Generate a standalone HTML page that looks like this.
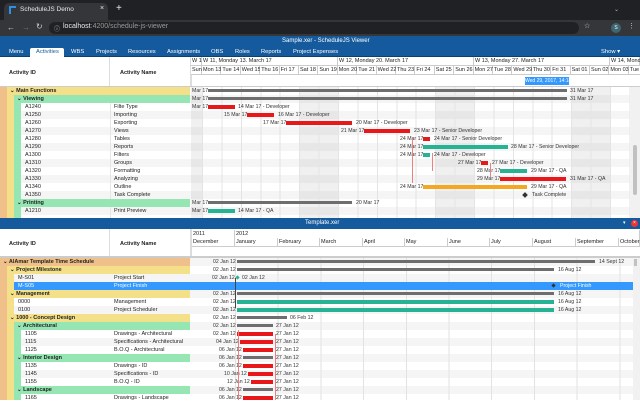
<!DOCTYPE html>
<html><head><meta charset="utf-8"><style>
*{margin:0;padding:0;box-sizing:border-box}
body{width:640px;height:400px;overflow:hidden;background:#fff;font-family:"Liberation Sans",Arial,sans-serif;position:relative;font-size:5.5px;color:#222}
div,span{position:absolute;white-space:nowrap}
.t{line-height:8px;height:8px}
.b{font-weight:bold}
.bar{height:4px}
.red{background:#e8171a}.teal{background:#26b394}.org{background:#f5a623}.gry{background:#6e6e6e;height:3px}
.lbl{line-height:8px;font-size:5.2px;color:#333}
.hd{font-size:5.5px;line-height:9px;border-right:1px solid #ccc;border-bottom:1px solid #ccc;padding-left:1px;height:9px;background:#fff}
</style></head><body>
<!-- browser chrome -->
<div style="left:0;top:0;width:640px;height:20px;background:#202124"></div>
<div style="left:4px;top:3px;width:104px;height:17px;background:#35363a;border-radius:5px 5px 0 0"></div>
<div style="left:9px;top:6px;width:7px;height:8px;border-left:2px solid #2d8fe6;border-top:2px solid #2d8fe6"></div>
<div style="left:20px;top:6px;color:#e8eaed;font-size:6.5px">ScheduleJS Demo</div>
<div style="left:100px;top:5px;color:#e8eaed;font-size:7px">×</div>
<div style="left:116px;top:3px;color:#e8eaed;font-size:10px">+</div>
<div style="left:614px;top:6px;color:#bbb;font-size:6px">⌄</div>
<div style="left:0;top:20px;width:640px;height:16px;background:#35363a"></div>
<div style="left:7px;top:23px;color:#ccc;font-size:8px">←</div>
<div style="left:22px;top:23px;color:#777;font-size:8px">→</div>
<div style="left:36px;top:22px;color:#ccc;font-size:8px">↻</div>
<div style="left:49px;top:22px;width:530px;height:12px;background:#202124;border-radius:6px"></div>
<div style="left:54px;top:24px;color:#ccc;font-size:6px">ⓘ</div>
<div style="left:63px;top:23px;color:#e8eaed;font-size:7px">localhost<span style="position:static;color:#999">:4200/schedule-js-viewer</span></div>
<div style="left:584px;top:22px;color:#ccc;font-size:7px">☆</div>
<div style="left:611px;top:23px;width:10px;height:10px;border-radius:5px;background:#3d6670;color:#fff;font-size:5px;text-align:center;line-height:10px">S</div>
<div style="left:628px;top:22px;color:#ccc;font-size:7px">⋮</div>
<!-- app top bar -->
<div style="left:0;top:36px;width:640px;height:21px;background:#155a9c"></div>
<div style="left:282px;top:38px;color:#fff;font-size:6px">Sample.xer - ScheduleJS Viewer</div>
<div style="left:0;top:56px;width:640px;height:1px;background:#0d3f70"></div>
<div style="left:30px;top:48px;width:34px;height:9px;background:#fff;border-radius:2px 2px 0 0"></div>
<div style="top:49px;left:0;width:640px;font-size:5.8px;color:#fff">
<span style="left:9px">Menu</span><span style="left:36px;color:#155a9c">Activities</span><span style="left:71px">WBS</span><span style="left:96px">Projects</span><span style="left:128px">Resources</span><span style="left:167px">Assignments</span><span style="left:211px">OBS</span><span style="left:235px">Roles</span><span style="left:261px">Reports</span><span style="left:293px">Project Expenses</span><span style="left:601px">Show ▾</span></div>
<!-- top header -->
<div style="left:0;top:57px;width:110px;height:30px;border-right:1px solid #ddd"></div>
<div class="b" style="left:9px;top:70px;font-size:5.5px">Activity ID</div>
<div class="b" style="left:120px;top:70px;font-size:5.5px">Activity Name</div>
<div style="left:190px;top:57px;width:2px;height:161px;background:#ddd"></div>
<div style="left:0;top:86px;width:640px;height:1px;background:#ccc"></div>
<div class="hd" style="left:191px;top:57px;width:11px">W 1</div>
<div class="hd" style="left:202px;top:57px;width:136px">W 11, Monday 13. March 17</div>
<div class="hd" style="left:338px;top:57px;width:136px">W 12, Monday 20. March 17</div>
<div class="hd" style="left:474px;top:57px;width:136px">W 13, Monday 27. March 17</div>
<div class="hd" style="left:610px;top:57px;width:30px">W 14, Monda</div>
<div style="top:66px;left:0">
<div class="hd" style="left:191px;width:11px">Sun</div><div class="hd" style="left:202px;width:19.4px">Mon 13</div><div class="hd" style="left:221.4px;width:19.4px">Tue 14</div><div class="hd" style="left:240.8px;width:19.4px">Wed 15</div><div class="hd" style="left:260.2px;width:19.4px">Thu 16</div><div class="hd" style="left:279.6px;width:19.4px">Fri 17</div><div class="hd" style="left:299px;width:19.4px">Sat 18</div><div class="hd" style="left:318.4px;width:19.4px">Sun 19</div><div class="hd" style="left:337.8px;width:19.4px">Mon 20</div><div class="hd" style="left:357.2px;width:19.4px">Tue 21</div><div class="hd" style="left:376.6px;width:19.4px">Wed 22</div><div class="hd" style="left:396px;width:19.4px">Thu 23</div><div class="hd" style="left:415.4px;width:19.4px">Fri 24</div><div class="hd" style="left:434.8px;width:19.4px">Sat 25</div><div class="hd" style="left:454.2px;width:19.4px">Sun 26</div><div class="hd" style="left:473.6px;width:19.4px">Mon 27</div><div class="hd" style="left:493px;width:19.4px">Tue 28</div><div class="hd" style="left:512.4px;width:19.4px">Wed 29</div><div class="hd" style="left:531.8px;width:19.4px">Thu 30</div><div class="hd" style="left:551.2px;width:19.4px">Fri 31</div><div class="hd" style="left:570.6px;width:19.4px">Sat 01</div><div class="hd" style="left:590px;width:19.4px">Sun 02</div><div class="hd" style="left:609.4px;width:19.4px">Mon 03</div><div class="hd" style="left:628.8px;width:12px">Tue</div></div>
<div style="left:525px;top:77px;width:44px;height:8px;background:#3399ff;color:#fff;font-size:5px;line-height:8px;text-align:center">Wed 29, 2017, 14:18</div>
<!-- top body rows -->
<div style="left:0;top:87px;width:630px;height:131px;background:repeating-linear-gradient(#fff 0 8px,#f5f5f5 8px 16px)"></div>
<div style="left:191px;top:87px;width:439px;height:131px;background:linear-gradient(90deg,rgba(0,0,0,.06) 0 11px,transparent 11px 108px,rgba(0,0,0,.06) 108px 147px,transparent 147px 244px,rgba(0,0,0,.06) 244px 283px,transparent 283px 380px,rgba(0,0,0,.06) 380px 419px,transparent 419px)"></div>
<div style="left:202px;top:87px;width:428px;height:131px;background:repeating-linear-gradient(90deg,#e4e4e4 0 1px,transparent 1px 19.43px)"></div>
<div style="left:630px;top:87px;width:10px;height:131px;background:#f1f1f1"></div>
<div style="left:633px;top:145px;width:4px;height:50px;background:#c1c1c1;border-radius:2px"></div>
<div style="left:0;top:87px;width:7px;height:131px;background:#f0c08a"></div>
<div style="left:7px;top:87px;width:7px;height:131px;background:#f5e08a"></div>
<div style="left:7px;top:87px;width:183px;height:8px;background:#f5e08a"></div>
<div style="left:14px;top:95px;width:7px;height:123px;background:#96e6b4"></div>
<div style="left:14px;top:95px;width:176px;height:8px;background:#96e6b4"></div>
<div style="left:14px;top:199px;width:176px;height:8px;background:#96e6b4"></div>
<div style="left:110px;top:103px;width:1px;height:96px;background:#e6e6e6"></div>
<div style="left:110px;top:207px;width:1px;height:11px;background:#e6e6e6"></div>
<div class="t b" style="left:10px;top:87px">⌄ Main Functions</div>
<div class="t b" style="left:17px;top:95px">⌄ Viewing</div>
<div style="left:0;top:103px">
<div class="t" style="left:25px;top:0">A1240</div><div class="t" style="left:114px;top:0">Filte Type</div>
<div class="t" style="left:25px;top:8px">A1250</div><div class="t" style="left:114px;top:8px">Importing</div>
<div class="t" style="left:25px;top:16px">A1260</div><div class="t" style="left:114px;top:16px">Exporting</div>
<div class="t" style="left:25px;top:24px">A1270</div><div class="t" style="left:114px;top:24px">Views</div>
<div class="t" style="left:25px;top:32px">A1280</div><div class="t" style="left:114px;top:32px">Tables</div>
<div class="t" style="left:25px;top:40px">A1290</div><div class="t" style="left:114px;top:40px">Reports</div>
<div class="t" style="left:25px;top:48px">A1300</div><div class="t" style="left:114px;top:48px">Filters</div>
<div class="t" style="left:25px;top:56px">A1310</div><div class="t" style="left:114px;top:56px">Groups</div>
<div class="t" style="left:25px;top:64px">A1320</div><div class="t" style="left:114px;top:64px">Formatting</div>
<div class="t" style="left:25px;top:72px">A1330</div><div class="t" style="left:114px;top:72px">Analyzing</div>
<div class="t" style="left:25px;top:80px">A1340</div><div class="t" style="left:114px;top:80px">Outline</div>
<div class="t" style="left:25px;top:88px">A1350</div><div class="t" style="left:114px;top:88px">Task Complete</div>
<div class="t b" style="left:17px;top:96px">⌄ Printing</div>
<div class="t" style="left:25px;top:104px">A1210</div><div class="t" style="left:114px;top:104px">Print Preview</div>
</div>
<!-- top bars -->
<div class="lbl" style="left:192px;top:87px">Mar 17</div><div class="gry" style="left:208px;top:89px;width:359px"></div><div class="lbl" style="left:570px;top:87px">31 Mar 17</div>
<div class="lbl" style="left:192px;top:95px">Mar 17</div><div class="gry" style="left:208px;top:97px;width:359px"></div><div class="lbl" style="left:570px;top:95px">31 Mar 17</div>
<div class="lbl" style="left:192px;top:103px">Mar 17</div><div class="bar red" style="left:208px;top:105px;width:27px"></div><div class="lbl" style="left:238px;top:103px">14 Mar 17 - Developer</div>
<div class="lbl" style="left:224px;top:111px">15 Mar 17</div><div class="bar red" style="left:247px;top:113px;width:27px"></div><div class="lbl" style="left:278px;top:111px">16 Mar 17 - Developer</div>
<div class="lbl" style="left:263px;top:119px">17 Mar 17</div><div class="bar red" style="left:286px;top:121px;width:66px"></div><div class="lbl" style="left:356px;top:119px">20 Mar 17 - Developer</div>
<div class="lbl" style="left:341px;top:127px">21 Mar 17</div><div class="bar red" style="left:364px;top:129px;width:46px"></div><div class="lbl" style="left:414px;top:127px">23 Mar 17 - Senior Developer</div>
<div class="lbl" style="left:400px;top:135px">24 Mar 17</div><div class="bar red" style="left:423px;top:137px;width:7px"></div><div class="lbl" style="left:434px;top:135px">24 Mar 17 - Senior Developer</div>
<div class="lbl" style="left:400px;top:143px">24 Mar 17</div><div class="bar teal" style="left:423px;top:145px;width:85px"></div><div class="lbl" style="left:511px;top:143px">28 Mar 17 - Senior Developer</div>
<div class="lbl" style="left:400px;top:151px">24 Mar 17</div><div class="bar teal" style="left:423px;top:153px;width:7px"></div><div class="lbl" style="left:434px;top:151px">24 Mar 17 - Developer</div>
<div class="lbl" style="left:458px;top:159px">27 Mar 17</div><div class="bar red" style="left:481px;top:161px;width:7px"></div><div class="lbl" style="left:492px;top:159px">27 Mar 17 - Developer</div>
<div class="lbl" style="left:477px;top:167px">28 Mar 17</div><div class="bar teal" style="left:500px;top:169px;width:27px"></div><div class="lbl" style="left:531px;top:167px">29 Mar 17 - QA</div>
<div class="lbl" style="left:477px;top:175px">29 Mar 17</div><div class="bar red" style="left:500px;top:177px;width:66px"></div><div class="lbl" style="left:570px;top:175px">31 Mar 17 - QA</div>
<div class="lbl" style="left:400px;top:183px">24 Mar 17</div><div class="bar org" style="left:423px;top:185px;width:104px"></div><div class="lbl" style="left:531px;top:183px">29 Mar 17 - QA</div>
<div style="left:523px;top:193px;width:4px;height:4px;background:#333;transform:rotate(45deg)"></div><div class="lbl" style="left:532px;top:191px">Task Complete</div>
<div class="lbl" style="left:192px;top:199px">Mar 17</div><div class="gry" style="left:208px;top:201px;width:144px"></div><div class="lbl" style="left:356px;top:199px">20 Mar 17</div>
<div class="lbl" style="left:192px;top:207px">Mar 17</div><div class="bar teal" style="left:208px;top:209px;width:27px"></div><div class="lbl" style="left:238px;top:207px">14 Mar 17 - QA</div>
<!-- connectors -->
<div style="left:412px;top:137px;width:1px;height:46px;background:#f08080"></div>
<div style="left:432px;top:153px;width:1px;height:18px;background:#f08080"></div>
<div style="left:490px;top:163px;width:1px;height:14px;background:#f08080"></div>
<!-- bottom title bar -->
<div style="left:0;top:218px;width:640px;height:11px;background:#155a9c"></div>
<div style="left:305px;top:220px;color:#fff;font-size:6px">Template.xer</div>
<div style="left:623px;top:220px;color:#fff;font-size:5px">▾</div>
<div style="left:631px;top:220px;width:7px;height:7px;border-radius:4px;background:#e33;color:#fff;font-size:5px;line-height:7px;text-align:center">×</div>
<!-- bottom header -->
<div style="left:0;top:229px;width:110px;height:28px;border-right:1px solid #ddd"></div>
<div class="b" style="left:9px;top:241px">Activity ID</div>
<div class="b" style="left:120px;top:241px">Activity Name</div>
<div style="left:190px;top:229px;width:2px;height:171px;background:#ddd"></div>
<div style="left:0;top:256px;width:640px;height:2px;background:#ccc"></div>
<div class="hd" style="left:192px;top:230px;width:43px">2011</div><div class="hd" style="left:235px;top:230px;width:405px">2012</div>
<div style="top:238px;left:0">
<div class="hd" style="left:192px;width:43px">December</div><div class="hd" style="left:235px;width:43px">January</div><div class="hd" style="left:278px;width:42px">February</div><div class="hd" style="left:320px;width:43px">March</div><div class="hd" style="left:363px;width:42px">April</div><div class="hd" style="left:405px;width:43px">May</div><div class="hd" style="left:448px;width:42px">June</div><div class="hd" style="left:490px;width:43px">July</div><div class="hd" style="left:533px;width:43px">August</div><div class="hd" style="left:576px;width:43px">September</div><div class="hd" style="left:619px;width:21px">October</div></div>
<!-- bottom rows -->
<div style="left:0;top:258px;width:633px;height:142px;background:repeating-linear-gradient(#f5f5f5 0 8px,#fff 8px 16px)"></div>
<div style="left:235px;top:258px;width:398px;height:142px;background:repeating-linear-gradient(90deg,#e2e2e2 0 1px,transparent 1px 42.7px)"></div>
<div style="left:633px;top:258px;width:7px;height:142px;background:#f1f1f1"></div>
<div style="left:634px;top:259px;width:3px;height:7px;background:#c1c1c1"></div>
<div style="left:0;top:258px;width:190px;height:8px;background:#f0c08a"></div>
<div style="left:0;top:258px;width:7px;height:142px;background:#f0c08a"></div>
<div style="left:7px;top:266px;width:7px;height:134px;background:#f5e08a"></div>
<div style="left:7px;top:266px;width:183px;height:8px;background:#f5e08a"></div>
<div style="left:7px;top:290px;width:183px;height:8px;background:#f5e08a"></div>
<div style="left:7px;top:314px;width:183px;height:8px;background:#f5e08a"></div>
<div style="left:14px;top:322px;width:7px;height:78px;background:#96e6b4"></div>
<div style="left:14px;top:322px;width:176px;height:8px;background:#96e6b4"></div>
<div style="left:14px;top:354px;width:176px;height:8px;background:#96e6b4"></div>
<div style="left:14px;top:386px;width:176px;height:8px;background:#96e6b4"></div>
<div style="left:14px;top:282px;width:619px;height:8px;background:#3399ff"></div>
<div style="left:0;top:258px">
<div class="t b" style="left:3px;top:0">⌄ AlAmar Template Time Schedule</div>
<div class="t b" style="left:10px;top:8px">⌄ Project Milestone</div>
<div class="t" style="left:18px;top:16px">M-S01</div><div class="t" style="left:114px;top:16px">Project Start</div>
<div class="t" style="left:18px;top:24px;color:#fff">M-S05</div><div class="t" style="left:114px;top:24px;color:#fff">Project Finish</div>
<div class="t b" style="left:10px;top:32px">⌄ Management</div>
<div class="t" style="left:18px;top:40px">0000</div><div class="t" style="left:114px;top:40px">Management</div>
<div class="t" style="left:18px;top:48px">0100</div><div class="t" style="left:114px;top:48px">Project Scheduler</div>
<div class="t b" style="left:10px;top:56px">⌄ 1000 - Concept Design</div>
<div class="t b" style="left:17px;top:64px">⌄ Architectural</div>
<div class="t" style="left:25px;top:72px">1105</div><div class="t" style="left:114px;top:72px">Drawings - Architectural</div>
<div class="t" style="left:25px;top:80px">1115</div><div class="t" style="left:114px;top:80px">Specifications - Architectural</div>
<div class="t" style="left:25px;top:88px">1125</div><div class="t" style="left:114px;top:88px">B.O.Q - Architectural</div>
<div class="t b" style="left:17px;top:96px">⌄ Interior Design</div>
<div class="t" style="left:25px;top:104px">1135</div><div class="t" style="left:114px;top:104px">Drawings - ID</div>
<div class="t" style="left:25px;top:112px">1145</div><div class="t" style="left:114px;top:112px">Specifications - ID</div>
<div class="t" style="left:25px;top:120px">1155</div><div class="t" style="left:114px;top:120px">B.O.Q - ID</div>
<div class="t b" style="left:17px;top:128px">⌄ Landscape</div>
<div class="t" style="left:25px;top:136px">1165</div><div class="t" style="left:114px;top:136px">Drawings - Landscape</div>
</div>
<!-- bottom bars -->
<div class="lbl" style="left:213px;top:258px">02 Jan 12</div><div class="gry" style="left:237px;top:260px;width:358px"></div><div class="lbl" style="left:599px;top:258px">14 Sept 12</div>
<div class="lbl" style="left:213px;top:266px">02 Jan 12</div><div class="gry" style="left:237px;top:268px;width:317px"></div><div class="lbl" style="left:558px;top:266px">16 Aug 12</div>
<div class="lbl" style="left:212px;top:274px">02 Jan 12</div><div style="left:236px;top:276px;width:3px;height:3px;background:#26b394;transform:rotate(45deg)"></div><div class="lbl" style="left:242px;top:274px">02 Jan 12</div>
<div style="left:552px;top:284px;width:3px;height:3px;background:#333;transform:rotate(45deg)"></div><div class="lbl" style="left:560px;top:282px;color:#fff">Project Finish</div>
<div class="lbl" style="left:213px;top:290px">02 Jan 12</div><div class="gry" style="left:237px;top:292px;width:317px"></div><div class="lbl" style="left:558px;top:290px">16 Aug 12</div>
<div class="lbl" style="left:213px;top:298px">02 Jan 12</div><div class="bar teal" style="left:237px;top:300px;width:317px"></div><div class="lbl" style="left:558px;top:298px">16 Aug 12</div>
<div class="lbl" style="left:213px;top:306px">02 Jan 12</div><div class="bar teal" style="left:237px;top:308px;width:317px"></div><div class="lbl" style="left:558px;top:306px">16 Aug 12</div>
<div class="lbl" style="left:213px;top:314px">02 Jan 12</div><div class="gry" style="left:237px;top:316px;width:50px"></div><div class="lbl" style="left:290px;top:314px">06 Feb 12</div>
<div class="lbl" style="left:213px;top:322px">02 Jan 12</div><div class="gry" style="left:237px;top:324px;width:36px"></div><div class="lbl" style="left:276px;top:322px">27 Jan 12</div>
<div class="lbl" style="left:213px;top:330px">02 Jan 12</div><div class="bar red" style="left:237px;top:332px;width:36px"></div><div class="lbl" style="left:276px;top:330px">27 Jan 12</div>
<div class="lbl" style="left:216px;top:338px">04 Jan 12</div><div class="bar red" style="left:240px;top:340px;width:33px"></div><div class="lbl" style="left:276px;top:338px">27 Jan 12</div>
<div class="lbl" style="left:219px;top:346px">06 Jan 12</div><div class="bar red" style="left:243px;top:348px;width:30px"></div><div class="lbl" style="left:276px;top:346px">27 Jan 12</div>
<div class="lbl" style="left:219px;top:354px">06 Jan 12</div><div class="gry" style="left:243px;top:356px;width:30px"></div><div class="lbl" style="left:276px;top:354px">27 Jan 12</div>
<div class="lbl" style="left:219px;top:362px">06 Jan 12</div><div class="bar red" style="left:243px;top:364px;width:30px"></div><div class="lbl" style="left:276px;top:362px">27 Jan 12</div>
<div class="lbl" style="left:224px;top:370px">10 Jan 12</div><div class="bar red" style="left:248px;top:372px;width:25px"></div><div class="lbl" style="left:276px;top:370px">27 Jan 12</div>
<div class="lbl" style="left:227px;top:378px">12 Jan 12</div><div class="bar red" style="left:251px;top:380px;width:22px"></div><div class="lbl" style="left:276px;top:378px">27 Jan 12</div>
<div class="lbl" style="left:219px;top:386px">06 Jan 12</div><div class="gry" style="left:243px;top:388px;width:30px"></div><div class="lbl" style="left:276px;top:386px">27 Jan 12</div>
<div class="lbl" style="left:219px;top:394px">06 Jan 12</div><div class="bar red" style="left:243px;top:396px;width:30px"></div><div class="lbl" style="left:276px;top:394px">27 Jan 12</div>
<div style="left:238px;top:330px;width:1px;height:70px;background:#f08080"></div>
<div style="left:275px;top:334px;width:1px;height:66px;background:#f08080"></div>
<div style="left:235px;top:278px;width:1px;height:30px;background:#444"></div>
</body></html>
